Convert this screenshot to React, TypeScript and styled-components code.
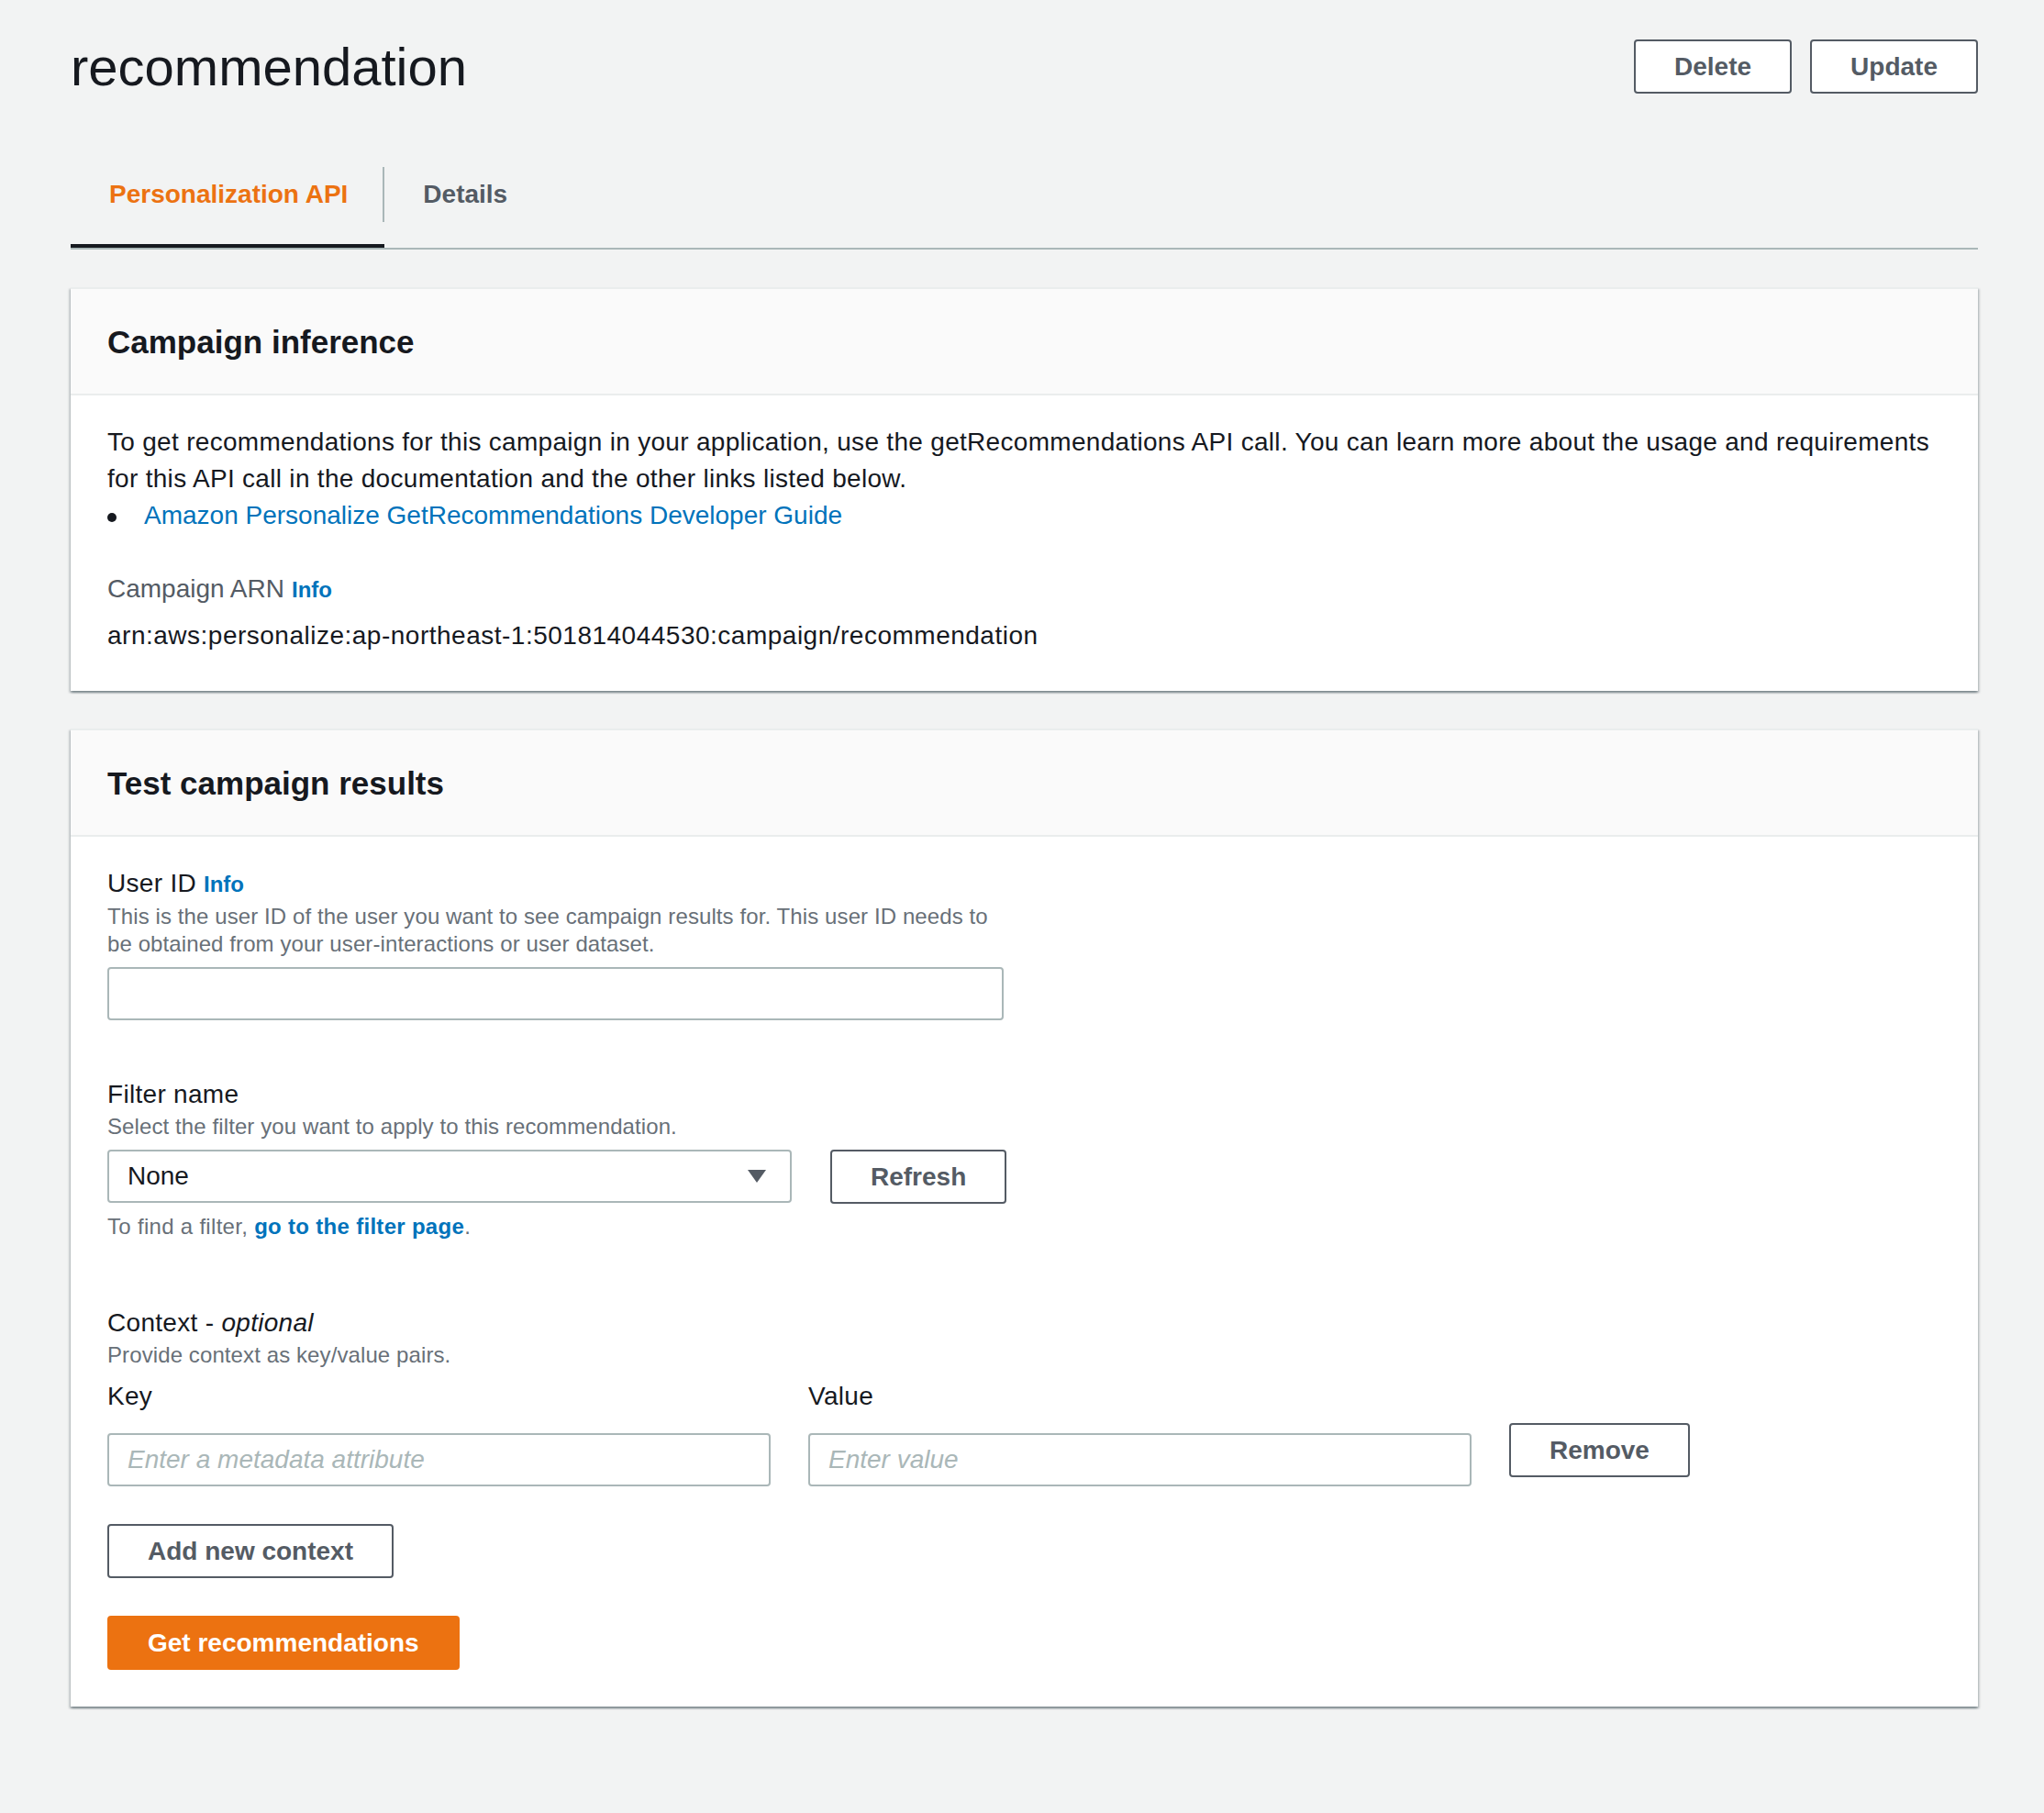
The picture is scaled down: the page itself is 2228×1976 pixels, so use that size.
import React from "react";
import styled, { createGlobalStyle } from "styled-components";

const Global = createGlobalStyle`
  html, body { margin: 0; padding: 0; background: #f2f3f3; }
  body { font-family: "Liberation Sans", Arial, sans-serif; color: #16191f; }
  * { box-sizing: border-box; }
`;

const Page = styled.div`
  padding: 37px 72px 80px 77px;
  width: 2228px;
  min-height: 1976px;
`;

const HeaderRow = styled.div`
  display: flex;
  justify-content: space-between;
  align-items: flex-start;
`;

const Title = styled.h1`
  margin: 0;
  font-size: 58px;
  line-height: 72px;
  font-weight: 400;
  color: #16191f;
`;

const Actions = styled.div`
  display: flex;
  gap: 20px;
  margin-top: 6px;
`;

const Button = styled.button<{ $primary?: boolean }>`
  font-family: inherit;
  font-size: 28px;
  font-weight: 700;
  line-height: 41px;
  padding: 7px 42px;
  border-radius: 4px;
  border: 2px solid ${(p) => (p.$primary ? "#ec7211" : "#545b64")};
  background: ${(p) => (p.$primary ? "#ec7211" : "#ffffff")};
  color: ${(p) => (p.$primary ? "#ffffff" : "#545b64")};
  cursor: pointer;
  white-space: nowrap;
`;

const TabList = styled.div`
  display: flex;
  margin-top: 73px;
  border-bottom: 2px solid #aab7b8;
`;

const Tab = styled.div<{ $active?: boolean }>`
  padding-bottom: 24px;
  border-bottom: 4px solid ${(p) => (p.$active ? "#16191f" : "transparent")};
`;

const TabLabel = styled.span<{ $active?: boolean; $divider?: boolean }>`
  display: block;
  padding: 10px 38px 10px 42px;
  font-size: 28px;
  line-height: 40px;
  font-weight: 700;
  color: ${(p) => (p.$active ? "#ec7211" : "#545b64")};
  border-right: 2px solid ${(p) => (p.$divider ? "#aab7b8" : "transparent")};
`;

const Panel = styled.section`
  margin-top: 41px;
  background: #ffffff;
  border-top: 2px solid #eaeded;
  box-shadow: 0 2px 2px 0 rgba(0, 28, 36, 0.3), 2px 2px 2px 0 rgba(0, 28, 36, 0.15),
    -2px 2px 2px 0 rgba(0, 28, 36, 0.15);
`;

const PanelHeader = styled.div`
  background: #fafafa;
  padding: 36px 40px 34px;
  border-bottom: 2px solid #eaeded;
`;

const PanelTitle = styled.h2`
  margin: 0;
  font-size: 35px;
  line-height: 44px;
  font-weight: 700;
  color: #16191f;
`;

const PanelBody = styled.div`
  padding: 31px 40px 40px;
`;

const Paragraph = styled.p`
  margin: 0;
  font-size: 28px;
  line-height: 40px;
  letter-spacing: 0.3px;
  color: #16191f;
`;

const LinkList = styled.ul`
  margin: 0;
  padding: 0;
  list-style: none;
  font-size: 28px;
  line-height: 40px;
`;

const LinkItem = styled.li`
  &::before {
    content: "";
    display: inline-block;
    width: 10px;
    height: 10px;
    border-radius: 50%;
    background: #16191f;
    vertical-align: middle;
    margin-right: 30px;
  }
`;

const Link = styled.a<{ $bold?: boolean }>`
  color: #0073bb;
  text-decoration: none;
  font-weight: ${(p) => (p.$bold ? 700 : 400)};
`;

const KeyLabel = styled.div`
  margin-top: 40px;
  font-size: 28px;
  line-height: 40px;
  color: #545b64;
`;

const Info = styled.a`
  font-size: 24px;
  font-weight: 700;
  letter-spacing: 0;
  color: #0073bb;
  text-decoration: none;
  margin-left: 8px;
`;

const KeyValue = styled.div`
  margin-top: 10px;
  font-size: 28px;
  line-height: 40px;
  letter-spacing: 0.5px;
  color: #16191f;
`;

const Field = styled.div<{ $gap?: number; $width?: number }>`
  margin-top: ${(p) => p.$gap ?? 0}px;
  width: ${(p) => (p.$width ? `${p.$width}px` : "auto")};
`;

const FieldLabel = styled.div`
  font-size: 28px;
  line-height: 40px;
  letter-spacing: 0.3px;
  color: #16191f;
  em { font-style: italic; }
`;

const Description = styled.div`
  font-size: 24px;
  line-height: 30px;
  letter-spacing: 0.1px;
  color: #687078;
`;

const Constraint = styled(Description)`
  margin-top: 10px;
  letter-spacing: 0.3px;
`;

const TextInput = styled.input`
  display: block;
  width: 100%;
  height: 58px;
  margin-top: 10px;
  padding: 0 20px;
  font-family: inherit;
  font-size: 28px;
  color: #16191f;
  background: #ffffff;
  border: 2px solid #aab7b8;
  border-radius: 4px;
  outline: none;
  &::placeholder {
    color: #aab7b8;
    font-style: italic;
  }
`;

const SelectRow = styled.div`
  display: flex;
  align-items: flex-start;
  gap: 42px;
  margin-top: 10px;
`;

const SelectBox = styled.div`
  width: 746px;
  height: 58px;
  display: flex;
  align-items: center;
  justify-content: space-between;
  padding: 0 25px 0 20px;
  font-size: 28px;
  color: #16191f;
  background: #ffffff;
  border: 2px solid #aab7b8;
  border-radius: 4px;
`;

const ContextRow = styled.div`
  display: flex;
  align-items: flex-end;
  gap: 41px;
  margin-top: 10px;
`;

const ContextColumn = styled.div`
  width: 723px;
`;

const ContextInput = styled(TextInput)`
  margin-top: 20px;
`;

const RemoveButton = styled(Button)`
  margin-bottom: 10px;
`;

const ButtonStack = styled.div`
  display: flex;
  flex-direction: column;
  align-items: flex-start;
  gap: 41px;
  margin-top: 41px;
`;

const Arrow = () => (
  <svg width="22" height="16" viewBox="0 0 22 16" aria-hidden="true">
    <path d="M1 1 L21 1 L11 15 Z" fill="#545b64" />
  </svg>
);

export default function App() {
  return (
    <>
      <Global />
      <Page>
        <HeaderRow>
          <Title>recommendation</Title>
          <Actions>
            <Button>Delete</Button>
            <Button>Update</Button>
          </Actions>
        </HeaderRow>

        <TabList>
          <Tab $active>
            <TabLabel $active $divider>
              Personalization API
            </TabLabel>
          </Tab>
          <Tab>
            <TabLabel>Details</TabLabel>
          </Tab>
        </TabList>

        <Panel>
          <PanelHeader>
            <PanelTitle>Campaign inference</PanelTitle>
          </PanelHeader>
          <PanelBody>
            <Paragraph>
              To get recommendations for this campaign in your application, use the
              getRecommendations API call. You can learn more about the usage and requirements
              for this API call in the documentation and the other links listed below.
            </Paragraph>
            <LinkList>
              <LinkItem>
                <Link href="#">Amazon Personalize GetRecommendations Developer Guide</Link>
              </LinkItem>
            </LinkList>
            <KeyLabel>
              Campaign ARN<Info href="#">Info</Info>
            </KeyLabel>
            <KeyValue>arn:aws:personalize:ap-northeast-1:501814044530:campaign/recommendation</KeyValue>
          </PanelBody>
        </Panel>

        <Panel>
          <PanelHeader>
            <PanelTitle>Test campaign results</PanelTitle>
          </PanelHeader>
          <PanelBody>
            <Field $width={977}>
              <FieldLabel>
                User ID<Info href="#">Info</Info>
              </FieldLabel>
              <Description>
                This is the user ID of the user you want to see campaign results for. This user ID
                needs to be obtained from your user-interactions or user dataset.
              </Description>
              <TextInput type="text" />
            </Field>

            <Field $gap={61}>
              <FieldLabel>Filter name</FieldLabel>
              <Description>Select the filter you want to apply to this recommendation.</Description>
              <SelectRow>
                <SelectBox>
                  <span>None</span>
                  <Arrow />
                </SelectBox>
                <Button>Refresh</Button>
              </SelectRow>
              <Constraint>
                To find a filter,{" "}
                <Link href="#" $bold>
                  go to the filter page
                </Link>
                .
              </Constraint>
            </Field>

            <Field $gap={70}>
              <FieldLabel>
                Context - <em>optional</em>
              </FieldLabel>
              <Description>Provide context as key/value pairs.</Description>
              <ContextRow>
                <ContextColumn>
                  <FieldLabel>Key</FieldLabel>
                  <ContextInput type="text" placeholder="Enter a metadata attribute" />
                </ContextColumn>
                <ContextColumn>
                  <FieldLabel>Value</FieldLabel>
                  <ContextInput type="text" placeholder="Enter value" />
                </ContextColumn>
                <RemoveButton>Remove</RemoveButton>
              </ContextRow>
            </Field>

            <ButtonStack>
              <Button>Add new context</Button>
              <Button $primary>Get recommendations</Button>
            </ButtonStack>
          </PanelBody>
        </Panel>
      </Page>
    </>
  );
}
